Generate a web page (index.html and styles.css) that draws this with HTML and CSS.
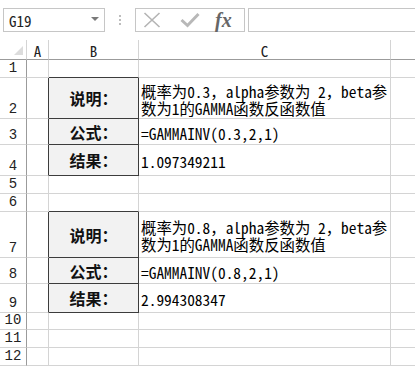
FILE: index.html
```html
<!DOCTYPE html>
<html>
<head>
<meta charset="utf-8">
<link rel="stylesheet" href="styles.css">
</head>
<body>
<div class="toolbar">
  <div class="namebox"><span class="nb-text">G19</span><span class="nb-arrow"></span></div>
  <div class="dots"><i></i><i></i><i></i></div>
  <div class="fbtns">
    <svg class="ic-x" width="18" height="16" viewBox="0 0 18 16"><path d="M1.5 1 L16.5 15 M16.5 1 L1.5 15" stroke="#b4b4b4" stroke-width="1.6" fill="none"/></svg>
    <svg class="ic-ok" width="20" height="16" viewBox="0 0 20 16"><path d="M1.5 8 L7.5 13.5 L18.5 2" stroke="#b8b8b8" stroke-width="3" fill="none"/></svg>
    <span class="fx">fx</span>
  </div>
  <div class="fbar"></div>
</div>
<div class="sheet">
  <div class="corner"><span class="tri"></span></div><div class="ch">A</div><div class="ch">B</div><div class="ch">C</div><div class="ch last"></div>

  <div class="rh">1</div><div class="c"></div><div class="c bb"></div><div class="c"></div><div class="c"></div>
  <div class="rh">2</div><div class="c br"></div><div class="c lab bx">说明：</div><div class="c txt wrap">概率为0.3，alpha参数为 2，beta参数为1的GAMMA函数反函数值</div><div class="c"></div>
  <div class="rh">3</div><div class="c br"></div><div class="c lab bx">公式：</div><div class="c txt">=GAMMAINV(0.3,2,1)</div><div class="c"></div>
  <div class="rh">4</div><div class="c br"></div><div class="c lab bx">结果：</div><div class="c txt">1.097349211</div><div class="c"></div>
  <div class="rh">5</div><div class="c"></div><div class="c"></div><div class="c"></div><div class="c"></div>
  <div class="rh">6</div><div class="c"></div><div class="c bb"></div><div class="c"></div><div class="c"></div>
  <div class="rh">7</div><div class="c br"></div><div class="c lab bx">说明：</div><div class="c txt wrap">概率为0.8，alpha参数为 2，beta参数为1的GAMMA函数反函数值</div><div class="c"></div>
  <div class="rh">8</div><div class="c br"></div><div class="c lab bx">公式：</div><div class="c txt">=GAMMAINV(0.8,2,1)</div><div class="c"></div>
  <div class="rh">9</div><div class="c br"></div><div class="c lab bx">结果：</div><div class="c txt">2.994308347</div><div class="c"></div>
  <div class="rh">10</div><div class="c"></div><div class="c"></div><div class="c"></div><div class="c"></div>
  <div class="rh">11</div><div class="c"></div><div class="c"></div><div class="c"></div><div class="c"></div>
  <div class="rh">12</div><div class="c"></div><div class="c"></div><div class="c"></div><div class="c"></div>
</div>
</body>
</html>
```
FILE: styles.css
```css
* { box-sizing: border-box; }
html, body { margin: 0; padding: 0; background: #fff; }
body {
  width: 415px; height: 368px; overflow: hidden;
  font-family: "Noto Sans Mono CJK SC", "Liberation Mono", "Noto Sans CJK SC", monospace;
  color: #000;
}
.toolbar {
  height: 40px;
  display: flex;
  align-items: flex-start;
  padding: 8px 0 0 3px;
}
.namebox {
  width: 102px; height: 24px;
  border: 1px solid #c6c6c6;
  display: flex; align-items: center; justify-content: space-between;
  padding: 0 5px 0 5px;
}
.nb-text { font-size: 15px; color: #222; line-height: 1; }
.nb-arrow {
  width: 0; height: 0;
  border-left: 4px solid transparent; border-right: 4px solid transparent;
  border-top: 4px solid #7a7a7a;
  margin-bottom: 3px;
}
.dots {
  width: 30px; height: 24px;
  display: flex; flex-direction: column; align-items: center; justify-content: center; gap: 2px;
}
.dots i { display: block; width: 2px; height: 2px; background: #bdbdbd; }
.fbtns {
  width: 110px; height: 24px;
  border: 1px solid #c6c6c6;
  display: flex; align-items: center;
  padding-left: 7px;
}
.ic-x { margin-right: 19px; }
.ic-ok { margin-right: 15px; }
.fx {
  font-family: "Liberation Serif", serif; font-style: italic; font-weight: bold;
  font-size: 20px; color: #666; line-height: 1;
}
.fbar {
  flex: 1; height: 24px; margin-left: 3px;
  border: 1px solid #c6c6c6; border-right: none;
}
.sheet {
  display: grid;
  grid-template-columns: 27px 22px 90px 252px 1fr;
  grid-template-rows: 20px 18px 41px 26px 31px 18px 18px 46px 26px 29px 17px 18px 18px;
  font-size: 15.4px;
}
.sheet > div {
  border-right: 1px solid #d4d4d4;
  border-bottom: 1px solid #d4d4d4;
  display: flex; align-items: center;
  line-height: 16px;
  white-space: nowrap;
}
.corner { border-bottom-color: #9b9b9b !important; position: relative; }
.tri {
  position: absolute; right: 3px; bottom: 4px;
  width: 0; height: 0;
  border-left: 9px solid transparent;
  border-bottom: 9px solid #dcdcdc;
}
.sheet > .ch {
  border-bottom-color: #9b9b9b;
  justify-content: center;
  padding-top: 2px;
  font-size: 15px; color: #222;
}
.sheet > .ch.last { border-right: none; }
.sheet > .rh {
  border-right-color: #9b9b9b;
  justify-content: center;
  align-items: flex-end;
  font-family: "Liberation Mono", monospace;
  font-size: 14px; color: #222;
  line-height: 13px;
  padding-bottom: 2px;
}
.sheet > .c:nth-child(5n) { border-right: none; }
.sheet > .bb { border-bottom-color: #3c3c3c; }
.sheet > .br { border-right-color: #3c3c3c; }
.sheet > .bx {
  border-right-color: #3c3c3c;
  border-bottom-color: #3c3c3c;
  background: #f2f2f2;
}
.sheet > .lab {
  justify-content: center;
  font-family: "Noto Sans CJK SC", sans-serif;
  font-weight: bold;
  font-size: 16px;
  color: #111;
}
.sheet > .txt { padding-left: 2px; padding-top: 2px; }
.sheet > .wrap { white-space: normal; line-height: 17px; word-break: break-all; padding-top: 3px; }
```
